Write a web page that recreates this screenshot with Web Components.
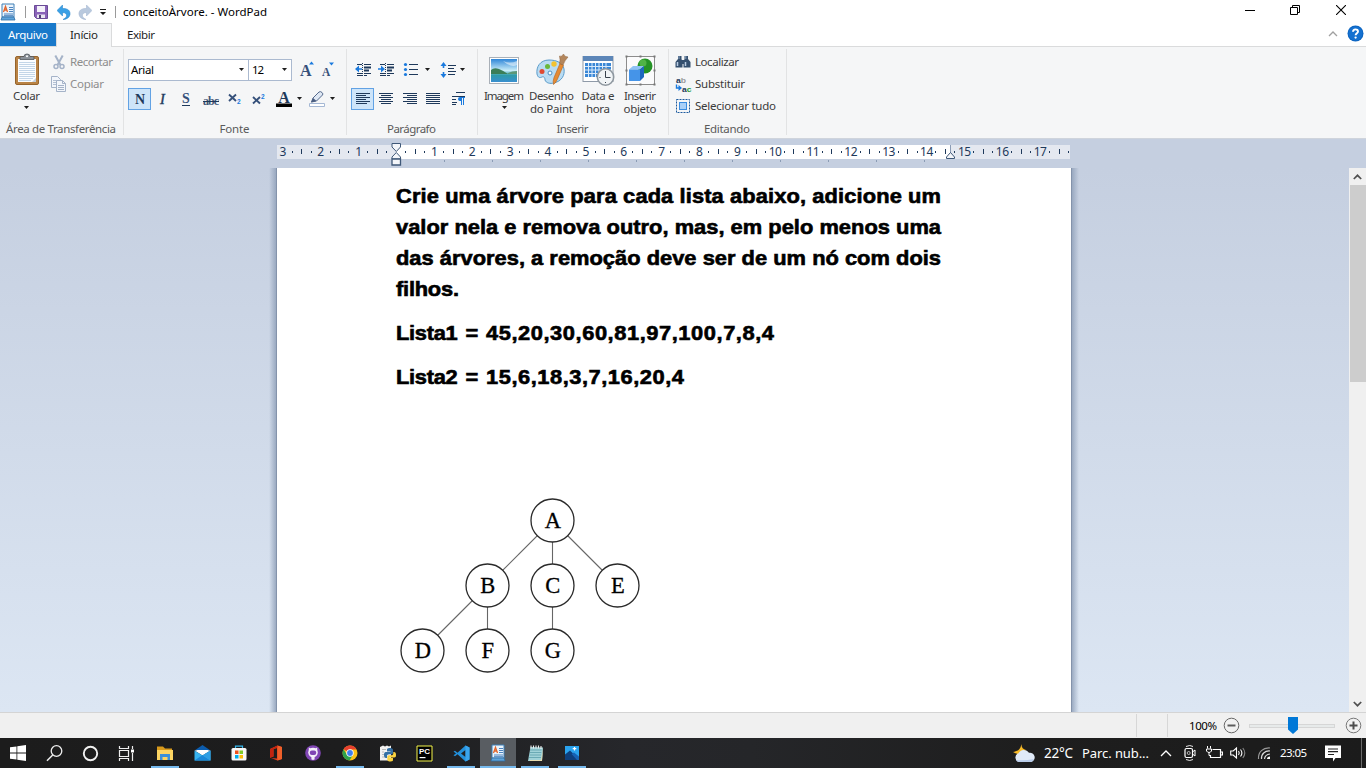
<!DOCTYPE html>
<html lang="pt-BR">
<head>
<meta charset="utf-8">
<title>conceitoÀrvore. - WordPad</title>
<style>
html,body{margin:0;padding:0}
body{width:1366px;height:768px;overflow:hidden;font-family:"Noto Sans","Open Sans",sans-serif;font-size:11.5px;color:#1e1e1e;background:#fff}
</style>
</head>
<body>
<wordpad-app></wordpad-app>
<script>
const serif = `font-family="Liberation Serif,serif"`;
const lines = (arr, c = '#1e395b') => arr.map(([x, y, w]) => `<rect x="${x}" y="${y}" width="${w}" height="1" fill="${c}"/>`).join('');
const ICONS = {
  dd: [7, 4, `<path d="M1 0h5L3.5 3z" fill="#1e1e1e"/>`],
  wordpad: [16, 18, `<path d="M2 1h12v13h-12z" fill="#eaf4fd" stroke="#3f7eb5"/><path d="M2 14h12l1 3H1z" fill="#5fa3da" stroke="#2f6ea6" stroke-width=".8"/><path d="M3.5 9L5.5 3.5 7.500 9M4.300 7h2.500" stroke="#e2642a" stroke-width="1.300" fill="none"/><path d="M9 4.500h4M9 6.500h4M9 8.500h4M4 11h9M4 12.700h9" stroke="#3a76b8" stroke-width=".9"/>`],
  save: [14, 14, `<path d="M.5.5h13v13h-11l-2-2z" fill="#8a63b8" stroke="#6a4a96"/><path d="M3 1h8v6H3z" fill="#f4f1fa"/><path d="M3 9.500h8V13H3z" fill="#e9e6f0"/><path d="M5 10h2v3H5z" fill="#4b4170"/>`],
  undo: [14, 15, `<path d="M0 5.500L5.500 0v3.500C10.500 3.200 13.500 5.500 13 9.500 12.600 12.500 9.500 14.500 6 14.500 9 13 10 11.500 9.500 9.800 9 8 7.500 7.500 5.500 7.700V11z" fill="#3aa0e6" stroke="#1e7cc4" stroke-width=".5"/>`],
  redo: [14, 15, `<g transform="matrix(-1 0 0 1 14 0)"><path d="M0 5.500L5.500 0v3.500C10.500 3.200 13.500 5.500 13 9.500 12.600 12.500 9.500 14.500 6 14.500 9 13 10 11.500 9.500 9.800 9 8 7.500 7.500 5.500 7.700V11z" fill="#b9c9de" stroke="#9fb3cf" stroke-width=".5"/></g>`],
  custom: [8, 8, `<path d="M1 1h6v1H1zM1 4h6L4 7z" fill="#1e1e1e"/>`],
  min: [10, 10, `<path d="M0 5h10v1H0z" fill="#000"/>`],
  restore: [10, 10, `<path d="M.5 2.500h7v7h-7zM2.500 2.500v-2h7v7h-2" fill="none" stroke="#000"/>`],
  close: [10, 10, `<path d="M0 0l10 10M10 0L0 10" stroke="#000" stroke-width="1.100"/>`],
  up: [10, 6, `<path d="M1 5l4-4 4 4" fill="none" stroke="#a0a0a0" stroke-width="1.300"/>`],
  help: [17, 17, `<circle cx="8.500" cy="8.500" r="8" fill="#0c64c0"/><circle cx="8.500" cy="8.500" r="7" fill="#1571d0"/><path d="M6 6.800C6 3.600 11 3.600 11 6.500 11 8.300 8.700 8.300 8.600 10.300" stroke="#fff" stroke-width="1.900" fill="none"/><circle cx="8.600" cy="12.600" r="1.150" fill="#fff"/>`],
  paste: [32, 34, `<rect x="4.500" y="3.500" width="23" height="28" rx="1.500" fill="#b98345" stroke="#96642c"/><path d="M7 6h18v23H7z" fill="#fbfdff"/><path d="M21 29l4-4v4z" fill="#c5cfda"/>${lines([[8,9,16],[8,11,16],[8,13,16],[8,15,16],[8,17,16],[8,19,16],[8,21,16],[8,23,16],[8,25,14],[8,27,12]], '#c3d6e8')}<path d="M9 6.500V4.500Q9 3.500 10.500 3.500H13Q13 1 16 1T19 3.500h2.500Q23 3.500 23 4.500v2z" fill="#8b9198" stroke="#50555b" stroke-width=".8"/><circle cx="16" cy="3.200" r="1" fill="#fff"/>`],
  cut: [16, 16, `<path d="M4.300 1.500L9.500 11M11.700 1.500L6.500 11" stroke="#a5b3c8" stroke-width="2" fill="none"/><circle cx="5" cy="12.500" r="2" fill="none" stroke="#a5b3c8" stroke-width="1.500"/><circle cx="11" cy="12.500" r="2" fill="none" stroke="#a5b3c8" stroke-width="1.500"/>`],
  copy: [16, 16, `<path d="M.5.500h6l3 3v8h-9z" fill="#f3f6fb" stroke="#a5b3c8"/><path d="M2 4.500h5M2 6.500h5M2 8.500h5" stroke="#b3c0d3"/><path d="M5.500 4.500h6l3 3v8h-9z" fill="#f3f6fb" stroke="#a5b3c8"/><path d="M11.500 4.500v3h3M7 9.500h6M7 11.500h6M7 13.500h6" stroke="#a5b3c8" fill="none"/>`],
  grow: [17, 18, `<text x="1" y="15" ${serif} font-weight="700" font-size="16" fill="#35507a">A</text><path d="M10 3.500l2.500-3L15 3.500z" fill="#1a7ade"/>`],
  shrink: [17, 18, `<text x="2" y="15" ${serif} font-weight="700" font-size="11.500" fill="#35507a">A</text><path d="M9 1.500h5l-2.500 3z" fill="#1a7ade"/>`],
  bold: [16, 18, `<text x="8" y="13.500" text-anchor="middle" ${serif} font-weight="700" font-size="14" fill="#1e395b">N</text>`],
  italic: [16, 18, `<text x="7.500" y="13.500" text-anchor="middle" ${serif} font-style="italic" font-size="14.500" fill="#1e395b" stroke="#1e395b" stroke-width=".4">I</text>`],
  under: [16, 18, `<text x="8" y="13" text-anchor="middle" ${serif} font-weight="700" font-size="14" fill="#35507a">S</text><path d="M4 15h8v1H4z" fill="#1e395b"/>`],
  strike: [20, 18, `<text x="10" y="14.500" text-anchor="middle" ${serif} font-weight="700" font-size="12" textLength="16" fill="#45597a">abc</text><path d="M2 11h16v1H2z" fill="#1e395b"/>`],
  sub: [16, 18, `<path d="M2 4.500l7 6.500M9 4.500l-7 6.500" stroke="#35507a" stroke-width="1.900"/><text x="10" y="13.500" font-family="Liberation Sans" font-weight="700" font-size="6.500" fill="#1a7ade">2</text>`],
  sup: [16, 18, `<path d="M2 7l7 6.500M9 7l-7 6.500" stroke="#35507a" stroke-width="1.900"/><text x="10" y="8.500" font-family="Liberation Sans" font-weight="700" font-size="6.500" fill="#1a7ade">2</text>`],
  color: [16, 18, `<text x="8" y="12.500" text-anchor="middle" ${serif} font-weight="700" font-size="16" fill="#1e395b">A</text><path d="M0 13.500h16v3.500H0z" fill="#000"/>`],
  mark: [16, 18, `<path d="M2.500 12l1.500-4L10 2Q11.500 1 13 2.500T13.500 5L7.500 11z" fill="#dfe8f4" stroke="#55698c"/><path d="M4 8l3.500 3L2 12.500z" fill="#4a5d80"/><path d="M.5 13.500h15v3H.5z" fill="#fff" stroke="#a5b8d4"/>`],
  outdent: [18, 16, `${lines([[3,2,5],[10,2,7],[3,11,5],[10,11,7],[3,13,5],[10,13,3]])}<rect x="10" y="4.500" width="7" height="2" fill="#1e395b"/><rect x="10" y="7.500" width="5" height="2" fill="#1e395b"/><path d="M8.500 1v14" stroke="#1e395b" stroke-dasharray="1 1"/><path d="M1 7l4-3.500v2.700h3v1.600H5v2.700z" fill="#1a7ade"/>`],
  indent: [18, 16, `${lines([[3,2,5],[10,2,7],[3,11,5],[10,11,7],[3,13,5],[10,13,3]])}<rect x="10" y="4.500" width="7" height="2" fill="#1e395b"/><rect x="10" y="7.500" width="5" height="2" fill="#1e395b"/><path d="M8.500 1v14" stroke="#1e395b" stroke-dasharray="1 1"/><path d="M8 7L4 3.500v2.700H1v1.600h3v2.700z" fill="#1a7ade"/>`],
  bullets: [16, 16, `<circle cx="2.500" cy="2.500" r="1.600" fill="#1a7ade"/><circle cx="2.500" cy="7.500" r="1.600" fill="#1a7ade"/><circle cx="2.500" cy="12.500" r="1.600" fill="#1a7ade"/>${lines([[6,2,9],[6,7,9],[6,12,9]])}`],
  spacing: [16, 16, `<path d="M3.500 0L6.500 4H4.300v2H2.700V4H.5zM3.500 16l3-4H4.300v-2H2.700v2H.5z" fill="#1a7ade"/>${lines([[8,3,8],[8,6,6],[8,9,8],[8,12,7]])}`],
  left: [16, 16, lines([[1,2,14],[1,4,10],[1,6,14],[1,8,10],[1,10,14],[1,12,11]])],
  center: [16, 16, lines([[1,2,14],[3,4,10],[1,6,14],[3,8,10],[1,10,14],[3,12,10]])],
  right: [16, 16, lines([[1,2,14],[5,4,10],[1,6,14],[5,8,10],[1,10,14],[5,12,10]])],
  justify: [16, 16, lines([[1,2,14],[1,4,14],[1,6,14],[1,8,14],[1,10,14],[1,12,14]])],
  para: [16, 16, `${lines([[5,1,9],[1,5,13],[1,8,4],[1,11,5],[1,13,4]])}<path d="M9 6h5v1h-1v7h-1V7h-1v7h-1v-4Q7 10 7 8T9 6z" fill="#1a7ade"/>`],
  image: [32, 32, `<rect x="1.500" y="3.500" width="29" height="26" fill="#fff" stroke="#a9b0b8"/><defs><linearGradient id="s" x2="0" y2="1"><stop offset="0" stop-color="#2f86d8"/><stop offset=".5" stop-color="#c8ecf8"/><stop offset=".7" stop-color="#2e9ba8"/><stop offset="1" stop-color="#3a8fd0"/></linearGradient></defs><path d="M3 5h26v23H3z" fill="url(#s)"/><path d="M3 16q3-3 8-1t9 5H3z" fill="#3b7e58"/><path d="M20 19q4-2 9-2v3h-9z" fill="#5b9878"/><path d="M15 7q7 3 14 0v4q-6 3-14-4z" fill="#fff" opacity=".5"/>`],
  paint: [34, 34, `<path d="M14 7C5 7 1 14 2 21c1 4 3 4 5 3s3 1 3 3c1 3 5 4 9 3 8-2 11-8 10-14S22 7 14 7z" fill="#b9dcf3" stroke="#5a9bca"/><circle cx="7" cy="18.500" r="2.500" fill="#e04a32"/><circle cx="12.500" cy="13.500" r="2.500" fill="#69b83c"/><circle cx="19" cy="11" r="2.700" fill="#f2c230"/><circle cx="15" cy="20" r="2" fill="#fff" stroke="#4a8dc0"/><path d="M18.500 31.500q-1-3 .5-7l6-14 3.500 1.500-6 14q-1.500 4-4 5.500z" fill="#e58a32" stroke="#b0601c" stroke-width=".6"/><path d="M24.500 10.500q1-4 0-7.500 2 1.500 4-2 1 3 4.500 3-3 3-5 8z" fill="#b3865c" stroke="#8d6138" stroke-width=".5"/>`],
  date: [33, 32, `<rect x="1" y="2.500" width="30" height="25" fill="#fff" stroke="#8f9aa8"/><path d="M1 2h30v5H1z" fill="#5c86b8"/><path d="M3 9h26v14H3z" fill="#3a87d6"/><path d="M3 12.500h26M3 16h26M3 19.500h26M6.500 9v14M10 9v14M13.500 9v14M17 9v14M20.500 9v14M24 9v14" stroke="#d9eafb"/><circle cx="23.500" cy="23" r="8.200" fill="#f1f4f6" stroke="#8e979f" stroke-width="1.600"/><path d="M23.500 17v6.500h5" stroke="#39424c" fill="none"/><path d="M23.500 29v-1M17.500 23.500h1" stroke="#39424c"/>`],
  object: [32, 32, `<rect x="2.500" y="2.500" width="28" height="28" fill="#fbfbfc" stroke="#8c8c8c"/><path d="M1.500 1.500h2v2h-2zM15.500 1.500h2v2h-2zM29.500 1.500h2v2h-2zM1.500 15.500h2v2h-2zM29.500 15.500h2v2h-2zM1.500 29.500h2v2h-2zM15.500 29.500h2v2h-2zM29.500 29.500h2v2h-2z" fill="#777"/><circle cx="21" cy="12" r="7.500" fill="#259326"/><circle cx="19" cy="9" r="3.500" fill="#63c254" opacity=".7"/><path d="M5 15.500l4-3.500h11l-4 3.500z" fill="#8ec2f5"/><path d="M5 15.500h11V27H5z" fill="#4594e8"/><path d="M16 15.500l4-3.500v11L16 27z" fill="#1f68c0"/>`],
  find: [16, 16, `<path d="M3 2h3.500v3L7.500 8v5.500h-7V8L3 5zM9.500 2H13v3l2.500 3v5.500h-7V8l1-3z" fill="#35506f"/><path d="M6 6h4v4H6z" fill="#35506f"/><path d="M2.500 8v4M10.500 8v4" stroke="#b8cbe2" stroke-width="1.500"/><path d="M4 2v3M10.800 2v3" stroke="#8aa3c2"/>`],
  replace: [17, 18, `<text x="1" y="7.500" font-family="Liberation Sans" font-weight="700" font-size="8" textLength="10" lengthAdjust="spacingAndGlyphs" fill="#1e395b">a<tspan fill="#9a9a9a">b</tspan></text><text x="7" y="16.500" font-family="Liberation Sans" font-weight="700" font-size="8" textLength="9.500" lengthAdjust="spacingAndGlyphs" fill="#1e395b">a<tspan fill="#2a9a3a">c</tspan></text><path d="M1.500 9.500V13H4" stroke="#1a7ade" stroke-width="1.400" fill="none"/><path d="M3.500 10l3.500 3-3.500 3z" fill="#1a7ade"/>`],
  all: [16, 16, `<rect x="1.500" y="1.500" width="13" height="13" fill="none" stroke="#1c5b9e" stroke-dasharray="2 1"/><rect x="4.500" y="4.500" width="7" height="7" fill="#a9d0f8" stroke="#3a8ce0"/>`],
  minus: [17, 17, `<circle cx="8.500" cy="8.500" r="7.300" fill="#f1f1f1" stroke="#666"/><path d="M4.500 7.500h8v2h-8z" fill="#5c5c5c"/>`],
  plus: [17, 17, `<circle cx="8.500" cy="8.500" r="7.300" fill="#f1f1f1" stroke="#777"/><path d="M4.500 7.500h8v2h-8z M7.500 4.500h2v8h-2z" fill="#4c4c4c"/>`],
  thumb: [10, 17, `<path d="M0 0h10v12.500L5 17 0 12.500z" fill="#0078d7"/>`],
  sUp: [9, 6, `<path d="M.8 5L4.500 1.300 8.200 5" fill="none" stroke="#505050" stroke-width="1.700"/>`],
  sDown: [9, 6, `<path d="M.8 1l3.700 3.700L8.200 1" fill="none" stroke="#505050" stroke-width="1.700"/>`],
  win: [16, 16, `<path d="M0 2.300L6.500 1.400v6.200H0zM7.300 1.300L16 0v7.600H7.300zM0 8.400h6.500v6.200L0 13.700zM7.300 8.400H16V16l-8.700-1.200z" fill="#fff"/>`],
  search: [17, 17, `<circle cx="10.500" cy="6" r="5.300" fill="none" stroke="#eee" stroke-width="1.300"/><path d="M6.700 10L1 15.800" stroke="#eee" stroke-width="1.500"/>`],
  cortana: [17, 17, `<circle cx="8.500" cy="8.500" r="6.700" fill="none" stroke="#f0f0f0" stroke-width="1.900"/>`],
  taskview: [17, 17, `<path d="M1.500 1v2.500h9V1M1.500 16v-2.500h9V16M1.500 5.500h9v6h-9zM14.500 1v3M14.500 8v8" fill="none" stroke="#eee" stroke-width="1.200"/><path d="M13 4.500h3v3h-3z" fill="#fff"/>`],
  explorer: [16, 15, `<path d="M0 .5h6l2 2h7v3H0z" fill="#d89a1c"/><path d="M0 4h16v10H0z" fill="#fcd462"/><path d="M3 14V8h10v6h-2.500v-3h-5v3z" fill="#3a8fd8"/>`],
  mail: [17, 16, `<path d="M.5 5.500L8.500 0l8 5.500z" fill="#0c5cad"/><path d="M.5 5.500h16l-8 5z" fill="#fff"/><path d="M.5 5.500l8 5 8-5V15.500H.5z" fill="#38b4f0"/><path d="M.5 15.500L8.500 10l8 5.500z" fill="#1b88d8"/><path d="M16.500 5.500v10L8.500 10.500z" fill="#2f9fe4"/><path d="M2 5h13l-6.500 4.500z" fill="#fff"/>`],
  store: [16, 16, `<path d="M4.500 4V1.200h7V4" fill="none" stroke="#35b8ee" stroke-width="1.200"/><rect x=".5" y="3" width="15" height="12.500" rx="1.500" fill="#f7f7f7"/><path d="M4 5.500h3.500V9H4z" fill="#f1511b"/><path d="M8.500 5.500H12V9H8.500z" fill="#80cc28"/><path d="M4 10h3.500v3.500H4z" fill="#00adef"/><path d="M8.500 10H12v3.500H8.500z" fill="#fbbc09"/>`],
  office: [14, 16, `<path d="M8.500.5L13 2v12l-4.500 1.500L2 13l6 .5V3L4.500 4v7.500L1 12.700V4z" fill="#e43e1b"/><path d="M8.500.500L13 2v12l-4.500 1.500z" fill="#f0602a"/><path d="M1 4L8.500.5 8 3 4.500 4v7.500L1 12.700z" fill="#c22410"/>`],
  github: [16, 16, `<circle cx="8" cy="8" r="7.800" fill="#8046b4"/><circle cx="8" cy="7.600" r="4.800" fill="#f4effa"/><path d="M3.800 6V2.600L7 4zM12.200 6V2.600L9 4z" fill="#f4effa"/><rect x="4.800" y="5.500" width="6.400" height="4.600" rx="2" fill="#8046b4"/><path d="M8 10.500v4.500M7 10.500v4M9 10.500v4" stroke="#f4effa" stroke-width="1.200"/>`],
  chrome: [16, 16, `<circle cx="8" cy="8" r="7.500" fill="#fbc116"/><path d="M8 8L1.500 4.200A7.500 7.500 0 0 1 14.700 4.600H8z" fill="#e8402f"/><path d="M1.500 4.200A7.500 7.500 0 0 0 7.500 15.500L11 9.700 5 9.700z" fill="#2da24c"/><circle cx="8" cy="8" r="3.700" fill="#fff"/><circle cx="8" cy="8" r="2.900" fill="#3f7fee"/>`],
  python: [17, 17, `<path d="M1 2l3-1.500 2 1 2-1 2 1 2-1v15H1z" fill="#f2f2f2"/><path d="M3 4.500h4M3 7h2M3 9.500h2M3 12h3" stroke="#bbb"/><path d="M10.500 3C8 3 8 4 8 5v1.500h3.500V7H7C5 7 5 9 5 10s.5 3 2 3h1v-2c0-1 .8-1.700 2-1.700h2.500c1 0 1.500-.8 1.500-1.600V5c0-1.500-1.500-2-3.500-2z" fill="#3470a4"/><path d="M11.500 16.500c2.500 0 2.500-1 2.500-2V13h-3.500v-.5H15c2 0 2-1.500 2-2.800S16.500 7 15 7h-.7v1.500c0 1-.8 1.800-2 1.800H9.800c-1 0-1.500.8-1.500 1.600v2.600c0 1.500 1.200 2 3.200 2z" fill="#fbd340"/>`],
  pycharm: [17, 17, `<path d="M1 1h15v15H1z" fill="#000" stroke="#f5f54a"/><text x="3" y="9" font-family="Liberation Sans" font-weight="700" font-size="8" fill="#fff" textLength="11">PC</text><path d="M3.500 12h6v1.200h-6z" fill="#fff"/>`],
  vscode: [17, 17, `<path d="M12.500.5L16.500 2.500v12l-4 2-8-7.300L2 11.200.5 10.300 3 8.500.5 6.500 2 5.700l2.500 2zM12.500 5L8 8.500l4.500 3.500z" fill="#2390db" fill-rule="evenodd"/><path d="M12.500.5l4 2v12l-4 2z" fill="#3aa5ee"/>`],
  notepad: [17, 17, `<path d="M3.500 2L16 2.500 15 16H1z" fill="#9fd2d8"/><path d="M16 3l-1 13H3l-.5-1H14z" fill="#e8dbae"/><path d="M3 5h11.500M3 7.500h11.300M2.500 10h11.500M2 12.500h12" stroke="#5da0ac" stroke-width=".8"/><path d="M4 .500v3M6.500.5v3M9 .500v3M11.500.5v3M14 1v3" stroke="#eee" stroke-width="1.100"/>`],
  photos: [14, 14, `<path d="M0 0h14v14H0z" fill="#2aa3ee"/><path d="M0 8.500L5 4.500 14 13v1H0z" fill="#0e3f7c"/><path d="M6.500 8L9 6.500l5 4V14H12z" fill="#1762b4"/><path d="M9.500 1v3.500M7.700 2.700h3.600" stroke="#fff" stroke-width="1.200"/>`],
  weather: [23, 20, `<path d="M8.500 0c-.5 4.500 1.500 6.500 4.500 7-3 5-8.500 5-13 2C5 8.500 8 6 8.500 0z" fill="#f9bb28"/><path d="M6 19a4.500 4.500 0 0 1-.5-8.700A6 6 0 0 1 16 9.800 4.700 4.700 0 1 1 18 19z" fill="#e0eaf8"/><path d="M3 17q8 1 18-1-1 3-3 3H6q-2 0-3-2z" fill="#bacdea"/>`],
  chev: [12, 8, `<path d="M1 7l5-5 5 5" fill="none" stroke="#fff" stroke-width="1.300"/>`],
  meet: [12, 16, `<path d="M2 1.500q4-2 7 0M2 14.500q4 2 7 0" stroke="#e8e8e8" fill="none"/><rect x="1" y="3.500" width="7.500" height="9" rx="1.500" fill="none" stroke="#fff" stroke-width="1.200"/><path d="M8.500 7l2.500-2v6L8.500 9" fill="none" stroke="#fff"/><circle cx="4.700" cy="8" r="1.500" fill="none" stroke="#ddd" stroke-width=".8"/>`],
  battery: [17, 14, `<path d="M6.500 3.500h8v8h-10V9.500M15 6h1.500v3H15" fill="none" stroke="#fff" stroke-width="1.200"/><path d="M1.500 0v2.500M4.500 0v2.500M.5 3h5v2q-1 1.500-2.500 1.500T.5 5z M3 6.500v3h2" stroke="#fff" fill="none"/>`],
  volume: [17, 14, `<path d="M.7 5v4h2.500L6.500 12V2L3.200 5z" fill="none" stroke="#fff" stroke-width="1.100"/><path d="M8.500 5q1.500 2 0 4M10.500 3.500q2.800 3.500 0 7" stroke="#fff" fill="none" stroke-width="1.100"/><path d="M12.800 2q4 5 0 10" stroke="#888" fill="none" stroke-width="1.100"/>`],
  wifi: [14, 14, `<path d="M1.500 13C1 6 6 1.500 13 2" stroke="#999" fill="none" stroke-width="1.200"/><path d="M4.500 13C4 8 8 4.500 13 5M7.500 13Q8 8.500 13 8" stroke="#ddd" fill="none" stroke-width="1.200"/><path d="M10 13q0-2.500 3-2.500V13z" fill="#fff"/>`],
  notify: [16, 17, `<path d="M0 .5h16v12.500h-5.500L8 16.500V13H0z" fill="#fff"/><path d="M3 4h10M3 6.700h10M3 9.500h6" stroke="#222" stroke-width="1.200"/>`]
};

function define(name, markup, setup) {
  const tpl = document.createElement('template');
  tpl.innerHTML = markup;
  customElements.define(name, class extends HTMLElement {
    connectedCallback() {
      if (this.shadowRoot) return;
      this.attachShadow({ mode: 'open' }).append(tpl.content.cloneNode(true));
      if (setup) setup(this, this.shadowRoot);
    }
  });
}

define('ui-icon', `<style>:host{display:block;flex:none}svg{display:block}</style><div></div>`, (el, root) => {
  const [w, h, body] = ICONS[el.getAttribute('name')];
  root.querySelector('div').innerHTML = `<svg width="${w}" height="${h}" viewBox="0 0 ${w} ${h}">${body}</svg>`;
  el.style.width = w + 'px';
  el.style.height = h + 'px';
});

/* A single line of text tracked to a given width; sx widens the glyphs, and
   head="n:px" tracks the first n characters to a width of their own. */
define('ui-label', `<style>:host{display:block;flex:none;white-space:nowrap;line-height:16px;height:16px}span.l{display:inline-block;transform-origin:0 50%}</style><span class="l"></span>`, (el, root) => {
  const text = el.getAttribute('text');
  if (!text) return;
  const s = root.querySelector('span'), w = +el.getAttribute('w'), sx = +(el.getAttribute('sx') || 1);
  const head = el.getAttribute('head');
  const track = (node, px, n) => {
    node.style.letterSpacing = ((px / sx - node.getBoundingClientRect().width) / n) + 'px';
  };
  if (head) {
    const [n, px] = head.split(':').map(Number);
    const a = document.createElement('span'), b = document.createElement('span');
    a.textContent = text.slice(0, n);
    a.style.wordSpacing = '2px';
    b.textContent = text.slice(n);
    s.append(a, b);
    track(a, px, n);
    track(b, w - px, text.length - n - 1);
  } else {
    s.textContent = text;
    track(s, w, text.length - 1);
  }
  if (sx !== 1) s.style.transform = `scaleX(${sx})`;
  el.style.width = w + 'px';
});

define('wp-titlebar', `<style>
:host{display:flex;height:23px;background:#fff;align-items:flex-start;justify-content:space-between;color:#000}
.q{display:grid;grid-template-columns:16px 18px 14px 9px 14px 7px 14px 7px 9px 15px auto;height:23px;align-items:center;padding-top:1px;box-sizing:border-box}
.q i{width:1px;height:12px;background:#9a9a9a;justify-self:center}
.c{display:grid;grid-template-columns:10px 35px 10px 36px 10px;padding:5px 20px 0 0}
</style><div class="q"><ui-icon name="wordpad"></ui-icon><i></i><ui-icon name="save"></ui-icon><b></b><ui-icon name="undo"></ui-icon><b></b><ui-icon name="redo"></ui-icon><b></b><ui-icon name="custom"></ui-icon><i></i><ui-label text="conceitoÀrvore. - WordPad" w="144"></ui-label></div>
<div class="c"><ui-icon name="min"></ui-icon><b></b><ui-icon name="restore"></ui-icon><b></b><ui-icon name="close"></ui-icon></div>`);

define('wp-tabs', `<style>
:host{display:flex;height:24px;background:#fff;box-shadow:inset 0 -1px #dadbdc}
.t{display:flex;justify-content:center;align-items:center;width:56px;box-sizing:border-box;padding-bottom:1px}
.file{background:#1979ca;color:#fff;padding-bottom:0;height:23px}
.on{background:#f5f6f7;border:1px solid #dadbdc;border-bottom:0;height:24px}
.r{margin-left:auto;display:flex;gap:9px;align-items:center;padding:0 2px 3px 0}
</style><div class="t file"><ui-label text="Arquivo" w="40"></ui-label></div><div class="t on"><ui-label text="Início" w="28"></ui-label></div><div class="t" style="width:58px"><ui-label text="Exibir" w="28"></ui-label></div>
<div class="r"><ui-icon name="up"></ui-icon><ui-icon name="help"></ui-icon></div>`);

define('ribbon-group', `<style>
:host{display:grid;grid-template-rows:72px 16px;height:91px;box-sizing:border-box;padding:2px 0 1px;background:linear-gradient(#e2e3e4,#e2e3e4) right 2px/1px 86px no-repeat}
.l{display:flex;justify-content:center;color:#5a5a5a;padding-right:2px}
</style><div class="b"><slot></slot></div><div class="l"></div>`, (el, root) => {
  const l = document.createElement('ui-label');
  l.setAttribute('text', el.getAttribute('label'));
  l.setAttribute('w', el.getAttribute('lw'));
  root.querySelector('.l').append(l);
});

define('big-button', `<style>
:host{display:flex;flex-direction:column;align-items:center;padding-top:4px;box-sizing:border-box}
.i{height:34px;display:flex;align-items:center}
.t{padding-top:1px}.t ui-label{height:13px}
</style><div class="i"></div><div class="t"></div>`, (el, root) => {
  root.querySelector('.i').innerHTML = `<ui-icon name="${el.getAttribute('icon')}"></ui-icon>`;
  const t = root.querySelector('.t');
  t.innerHTML = el.getAttribute('lines').split('|').map(p => {
    const [text, w] = p.split(':');
    return text === 'v' ? '<ui-icon name="dd" style="margin:5px auto 0"></ui-icon>' : `<ui-label text="${text}" w="${w}" style="margin:0 auto"></ui-label>`;
  }).join('');
});

define('small-button', `<style>:host{display:flex;align-items:center;height:22px;gap:3px}:host([disabled]){color:#8d8d8d;gap:2px}.i{width:17px}</style><div class="i"></div>`, (el, root) => {
  root.querySelector('.i').innerHTML = `<ui-icon name="${el.getAttribute('icon')}"></ui-icon>`;
  const l = document.createElement('ui-label');
  l.setAttribute('text', el.getAttribute('text'));
  l.setAttribute('w', el.getAttribute('w'));
  root.append(l);
});

define('tool-row', `<style>:host{display:flex;height:22px}.c{display:flex;align-items:center;justify-content:center;box-sizing:border-box}.on{background:#cde4f9;border:1px solid #62a2e4}</style>`, (el, root) => {
  for (const cell of el.getAttribute('items').split(' ')) {
    const [name, w, on] = cell.split(':');
    const d = document.createElement('div');
    d.className = 'c' + (on ? ' on' : '');
    d.style.width = w + 'px';
    if (name !== '-') d.innerHTML = `<ui-icon name="${name}"></ui-icon>`;
    root.append(d);
  }
});

define('combo-box', `<style>:host{display:flex;box-sizing:border-box;height:22px;border:1px solid #abbad0;background:#fff;align-items:center;justify-content:space-between;padding:0 3px 0 2px;color:#000}</style><ui-icon name="dd"></ui-icon>`, (el, root) => {
  const l = document.createElement('ui-label');
  l.setAttribute('text', el.getAttribute('value'));
  l.setAttribute('w', el.getAttribute('w'));
  root.insertBefore(l, root.querySelector('ui-icon'));
});

define('wp-ribbon', `<style>
:host{display:flex;height:92px;box-sizing:border-box;background:#f5f6f7;border-bottom:1px solid #cfd4dc;color:#3b3b3b}
.row{display:flex}
</style>
<ribbon-group label="Área de Transferência" lw="110" style="width:124px"><div class="row"><big-button icon="paste" lines="Colar:27|v" style="width:51px;padding-left:2px"></big-button><div style="padding-top:2px"><small-button disabled icon="cut" text="Recortar" w="43"></small-button><small-button disabled icon="copy" text="Copiar" w="34"></small-button></div></div></ribbon-group>
<ribbon-group label="Fonte" lw="30" style="width:223px"><div style="padding:10px 0 0 4px"><div class="row"><combo-box value="Arial" w="23" style="width:121px"></combo-box><combo-box value="12" w="12" style="width:44px;margin-left:-1px;padding-left:3px"></combo-box><tool-row items="-:6 grow:19 -:3 shrink:17"></tool-row></div><tool-row style="margin-top:7px" items="bold:23:on italic:23 under:24 strike:25 sub:24 sup:23 -:2 color:24 dd:7 -:2 mark:24 dd:7"></tool-row></div></ribbon-group>
<ribbon-group label="Parágrafo" lw="49" style="width:131px"><div style="padding:10px 0 0 4px"><tool-row items="outdent:24 indent:21 -:4 bullets:22 -:1 dd:8 -:7 spacing:20 dd:9"></tool-row><tool-row style="margin-top:7px" items="left:23:on center:24 right:24 justify:22 -:3 para:24"></tool-row></div></ribbon-group>
<ribbon-group label="Inserir" lw="32" style="width:191px"><div class="row" style="padding-left:2px"><big-button icon="image" lines="Imagem:40|v" style="width:48px"></big-button><big-button icon="paint" lines="Desenho:45|do Paint:43" style="width:47px"></big-button><big-button icon="date" lines="Data e:33|hora:24" style="width:46px"></big-button><big-button icon="object" lines="Inserir:32|objeto:33" style="width:38px"></big-button></div></ribbon-group>
<ribbon-group label="Editando" lw="46" style="width:118px"><div style="padding:2px 0 0 6px"><small-button icon="find" text="Localizar" w="44"></small-button><small-button icon="replace" text="Substituir" w="50"></small-button><small-button icon="all" text="Selecionar tudo" w="81"></small-button></div></ribbon-group>`);

define('wp-ruler', `<style>:host{display:block;height:29px;background:#c5cfe0;padding-left:277px}svg{display:block}</style><div></div>`, (el, root) => {
  const step = 37.87, zero = 119.3;
  let s = `<rect y="6" width="793" height="14" fill="#e4e8f0"/><rect x="119" y="6" width="554" height="14" fill="#fff"/>`;
  for (let q = -12; q < 72; q++) {
    const x = zero + q * step / 4;
    if (q === 0 || x > 793) continue;
    if (q % 4 === 0) s += `<text x="${x}" y="17" text-anchor="middle" font-family="Noto Sans,sans-serif" font-size="12" letter-spacing="-.5" fill="#1e395b">${Math.abs(q / 4)}</text>`;
    else if (q % 2 === 0) s += `<rect x="${Math.round(x - .5)}" y="10" width="1" height="5" fill="#1e395b"/>`;
    else s += `<rect x="${Math.round(x - .5)}" y="12" width="1" height="2" fill="#1e395b"/>`;
  }
  for (let i = 0; i < 11; i++) s += `<rect x="${167 + i * 48}" y="21" width="1" height="2" fill="#8b9cb5"/>`;
  s += `<g transform="translate(114.500 4)" fill="#f4f6fa" stroke="#3f5878"><path d="M.5.500h8.500V4L4.800 8.500.5 4z"/><path d="M4.800 9.500L9 14v2H.5v-2z"/><path d="M.5 16h8.500v6H.5z" stroke-width="1.300"/></g>`;
  s += `<path d="M673.500 6v8" stroke="#8b9cb5"/><path d="M669.500 19.500V18l4-4.500 4 4.500v1.500z" fill="#f4f6fa" stroke="#3f5878"/>`;
  root.querySelector('div').innerHTML = `<svg width="794" height="29">${s}</svg>`;
});

define('tree-diagram', `<style>:host{display:block}svg{display:block}</style><div></div>`, (el, root) => {
  const nodes = { A: [156.500, 30.500], B: [91.500, 95.500], C: [156.500, 95.500], E: [221.500, 95.500], D: [26.500, 160.500], F: [91.500, 160.500], G: [156.500, 160.500] };
  const edges = ['AB', 'AC', 'AE', 'BD', 'BF', 'CG'];
  root.querySelector('div').innerHTML = `<svg width="260" height="190">` +
    edges.map(([a, b]) => `<line x1="${nodes[a][0]}" y1="${nodes[a][1]}" x2="${nodes[b][0]}" y2="${nodes[b][1]}" stroke="#666" stroke-width="1.100"/>`).join('') +
    Object.entries(nodes).map(([k, [x, y]]) => `<circle cx="${x}" cy="${y}" r="21.500" fill="#fff" stroke="#2a2a2a" stroke-width="1.300"/><text x="${x + .3}" y="${y + 7.500}" text-anchor="middle" ${serif} font-size="22.500" fill="#000" stroke="#000" stroke-width=".3">${k}</text>`).join('') + `</svg>`;
});

define('wp-document', `<style>
:host{display:flex;height:544px;background:linear-gradient(#c5cfe0,#dce6f3)}
.sh{width:8px;margin-left:269px;background:linear-gradient(90deg,#a0afc800,#93a3bb);box-shadow:inset -1px 0 #8493ab}
.sh.r{margin-left:0;background:linear-gradient(270deg,#a0afc800,#93a3bb);box-shadow:inset 1px 0 #8493ab}
.p{width:794px;background:#fff;box-sizing:border-box;padding:18px 0 0 119px;font-family:"Liberation Sans",Arial,sans-serif;font-weight:700;font-size:19.500px;color:#000;-webkit-text-stroke:.6px #000}
.p ui-label{height:31px;line-height:20px}
.p ui-label.g{height:44px}
tree-diagram{-webkit-text-stroke:0;font-weight:400;margin:79px 0 0}
.bar{margin-left:auto;width:17px;background:#f0f0f0;display:flex;flex-direction:column;align-items:center;justify-content:space-between}
.top{display:flex;flex-direction:column;align-items:center;padding-top:6px;gap:5px}
.th{width:16px;height:197px;background:#cdcdcd}
</style><div class="sh"></div><div class="p">
<ui-label sx="1.12" w="545" text="Crie uma árvore para cada lista abaixo, adicione um"></ui-label>
<ui-label sx="1.12" w="545" text="valor nela e remova outro, mas, em pelo menos uma"></ui-label>
<ui-label sx="1.12" w="545" text="das árvores, a remoção deve ser de um nó com dois"></ui-label>
<ui-label class="g" sx="1.12" w="63" text="filhos."></ui-label>
<ui-label class="g" sx="1.12" head="9:90" w="378" text="Lista1 = 45,20,30,60,81,97,100,7,8,4"></ui-label>
<ui-label class="g" sx="1.12" head="9:90" w="288" text="Lista2 = 15,6,18,3,7,16,20,4"></ui-label>
<tree-diagram></tree-diagram></div><div class="sh r"></div>
<div class="bar"><div class="top"><ui-icon name="sUp"></ui-icon><div class="th"></div></div><ui-icon name="sDown" style="margin-bottom:5px"></ui-icon></div>`);

define('wp-status', `<style>
:host{display:flex;justify-content:flex-end;height:26px;box-sizing:border-box;background:#f0f0f0;border-top:1px solid #d4d4d4;color:#000}
.g{display:grid;grid-template-columns:31px 22px 28px 6px 17px 9px 86px 10px 17px 4px;align-items:center}
.s{border-left:1px solid #d7d7d7;height:23px}
.t{background:#e7eaea;border:1px solid #d6d6d6;box-sizing:border-box;height:4px;display:flex;align-items:center;padding-left:38px}
</style><div class="g"><div class="s"></div><div class="s"></div><ui-label text="100%" w="28"></ui-label><b></b><ui-icon name="minus"></ui-icon><b></b><div class="t"><ui-icon name="thumb"></ui-icon></div><b></b><ui-icon name="plus"></ui-icon></div>`);

define('task-button', `<style>:host{display:flex;width:36px;height:30px;box-sizing:border-box;align-items:center;justify-content:center;flex:none}
:host([run]){background:linear-gradient(#76b9ed,#76b9ed) 4px 28px/28px 2px no-repeat}
:host([active]){background:linear-gradient(#76b9ed,#76b9ed) 0 28px/36px 2px no-repeat,#595d62}</style><slot></slot>`);

define('win-taskbar', `<style>
:host{display:flex;height:30px;background:linear-gradient(90deg,#1c1c1c,#1d1d1e 25%,#26272b 46%,#252629 55%,#1e1e1e 75%,#1b1b1b);color:#fff;justify-content:space-between}
.a{display:flex}.b{display:flex;gap:1px;padding-left:3px}
.t{display:grid;grid-template-columns:23px 8px 30px 8px 67px 11px 12px 12px 12px 10px 17px 7px 17px 10px 14px 9px 28px 17px 16px 20px 5px;align-items:center}
.e{width:1px;height:30px;background:#6a6a6a}
</style><div class="a"><task-button><ui-icon name="win"></ui-icon></task-button><task-button><ui-icon name="search"></ui-icon></task-button><task-button><ui-icon name="cortana"></ui-icon></task-button><task-button><ui-icon name="taskview"></ui-icon></task-button>
<div class="b"><task-button run><ui-icon name="explorer"></ui-icon></task-button><task-button><ui-icon name="mail"></ui-icon></task-button><task-button><ui-icon name="store"></ui-icon></task-button><task-button><ui-icon name="office"></ui-icon></task-button><task-button><ui-icon name="github"></ui-icon></task-button><task-button run><ui-icon name="chrome"></ui-icon></task-button><task-button><ui-icon name="python"></ui-icon></task-button><task-button><ui-icon name="pycharm"></ui-icon></task-button><task-button run><ui-icon name="vscode"></ui-icon></task-button><task-button active><ui-icon name="wordpad"></ui-icon></task-button><task-button run><ui-icon name="notepad"></ui-icon></task-button><task-button run><ui-icon name="photos"></ui-icon></task-button></div></div>
<div class="t"><ui-icon name="weather"></ui-icon><b></b><ui-label style="font-size:13.500px" text="22°C" w="29"></ui-label><b></b><ui-label style="font-size:13px" text="Parc. nub..." w="67"></ui-label><b></b><ui-icon name="chev"></ui-icon><b></b><ui-icon name="meet"></ui-icon><b></b><ui-icon name="battery"></ui-icon><b></b><ui-icon name="volume"></ui-icon><b></b><ui-icon name="wifi"></ui-icon><b></b><ui-label style="font-size:11.500px" text="23:05" w="27"></ui-label><b></b><ui-icon name="notify"></ui-icon><b></b><div class="e"></div></div>`);

define('wordpad-app', `<style>:host{display:flex;flex-direction:column;width:1366px;height:768px;overflow:hidden}</style>
<wp-titlebar></wp-titlebar><wp-tabs></wp-tabs><wp-ribbon></wp-ribbon><wp-ruler></wp-ruler><wp-document></wp-document><wp-status></wp-status><win-taskbar></win-taskbar>`);
</script>
</body>
</html>
